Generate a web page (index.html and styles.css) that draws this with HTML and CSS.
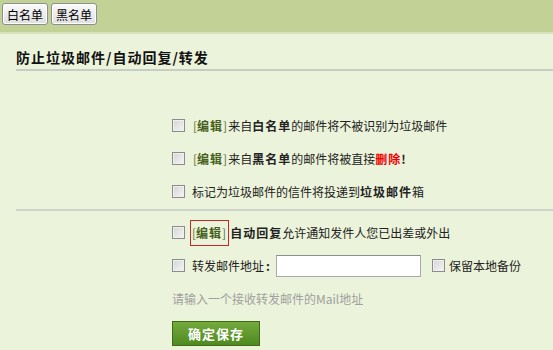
FILE: index.html
```html
<!DOCTYPE html>
<html lang="zh-CN">
<head>
    <meta charset="UTF-8">
    <title>防止垃圾邮件/自动回复/转发</title>
    <link rel="stylesheet" href="styles.css">
</head>
<body>
    <div class="topbar">
        <button class="tab-btn">白名单</button>
        <button class="tab-btn">黑名单</button>
    </div>

    <div class="content">
        <h2 class="title">防止垃圾邮件/自动回复/转发</h2>

        <div class="group">
            <div class="row">
                <input type="checkbox" class="chk">
                <a class="edit">[<b>编辑</b>]</a>来自<b class="em">白名单</b>的邮件将不被识别为垃圾邮件
            </div>
            <div class="row">
                <input type="checkbox" class="chk">
                <a class="edit">[<b>编辑</b>]</a>来自<b class="em">黑名单</b>的邮件将被直接<b class="em red">删除</b><b>!</b>
            </div>
            <div class="row">
                <input type="checkbox" class="chk">
                标记为垃圾邮件的信件将投递到<b class="em">垃圾邮件</b>箱
            </div>
        </div>

        <div class="sep"></div>

        <div class="group">
            <div class="row">
                <input type="checkbox" class="chk">
                <span class="mark"><a class="edit">[<b>编辑</b>]</a></span><b class="em">自动回复</b>允许通知发件人您已出差或外出
            </div>
            <div class="row">
                <input type="checkbox" class="chk">
                <span class="label">转发邮件地址<b class="colon">:</b></span>
                <input type="text" class="addr">
                <input type="checkbox" class="chk chk-right">
                保留本地备份
            </div>
            <div class="hint">请输入一个接收转发邮件的Mail地址</div>
            <div class="actions">
                <button class="save">确定保存</button>
            </div>
        </div>
    </div>
</body>
</html>
```

FILE: styles.css
```css
body {
    margin: 0;
    background-color: #ebf3da;
    font-family: "Noto Sans CJK SC", "Liberation Sans", sans-serif;
    font-size: 12px;
    color: #222;
}
.topbar {
    height: 34px;
    background-color: #c2d296;
    border-bottom: 2px solid #d6e2bb;
    padding: 3px 0 0 2px;
    box-sizing: border-box;
    display: flex;
    gap: 3px;
    align-items: flex-start;
}
.tab-btn {
    height: 22px;
    padding: 0 4px;
    font-family: inherit;
    font-size: 12px;
    color: #000;
    background: linear-gradient(#fbfbfb, #dedede);
    border: 1px solid #8e8e8e;
    border-radius: 3px;
    box-shadow: inset 0 0 0 1px #fff;
}
.content {
    padding-left: 16px;
}
.title {
    margin: 0;
    padding-top: 13px;
    height: 22px;
    font-size: 14px;
    letter-spacing: 1px;
    font-weight: bold;
    color: #111;
    border-bottom: 2px solid #c6cec3;
}
.group {
    padding-left: 156px;
}
.content > .group:nth-of-type(1) {
    padding-top: 38px;
}
.row {
    height: 33px;
    display: flex;
    align-items: center;
    white-space: nowrap;
}
.chk {
    appearance: none;
    -webkit-appearance: none;
    width: 13px;
    height: 13px;
    margin: 0 7px 0 0;
    border: 1px solid #8c8c8c;
    background: linear-gradient(135deg, #d4d4d4, #f6f6f6);
    box-shadow: inset 0 0 0 1px #f0f0f0;
    box-sizing: border-box;
    flex-shrink: 0;
}
.chk-right {
    margin-left: 11px;
    margin-right: 4px;
}
.edit {
    color: #5f7236;
    margin-left: 1px;
    margin-right: 1px;
}
.edit b {
    color: #46601c;
    letter-spacing: 1px;
}
.em {
    letter-spacing: 1px;
}
.red {
    color: #ee0000;
}
.mark {
    display: inline-flex;
    align-items: center;
    height: 24px;
    padding: 0 1px;
    border: 1px solid #c0282a;
    margin-right: 1px;
    margin-left: -2px;
}
.mark .edit {
    margin-left: 0;
}
.label {
    margin-right: 6px;
}
.colon {
    margin-left: 2px;
}
.addr {
    width: 145px;
    height: 22px;
    box-sizing: border-box;
    border: 1px solid #a9a9a9;
    border-top-color: #8d8d8d;
    background: #fff;
    margin: 0;
}
.sep {
    height: 2px;
    background-color: #cdd4cc;
    margin-top: 1px;
    margin-bottom: 5px;
}
.hint {
    height: 30px;
    line-height: 30px;
    padding-top: 2px;
    color: #a0a0a0;
}
.actions {
    padding-top: 7px;
}
.save {
    width: 88px;
    height: 25px;
    font-family: inherit;
    font-size: 13px;
    font-weight: bold;
    letter-spacing: 1px;
    color: #fff;
    background: linear-gradient(#74aa3e, #4f8a20);
    border: 1px solid #3d6b16;
}
```
